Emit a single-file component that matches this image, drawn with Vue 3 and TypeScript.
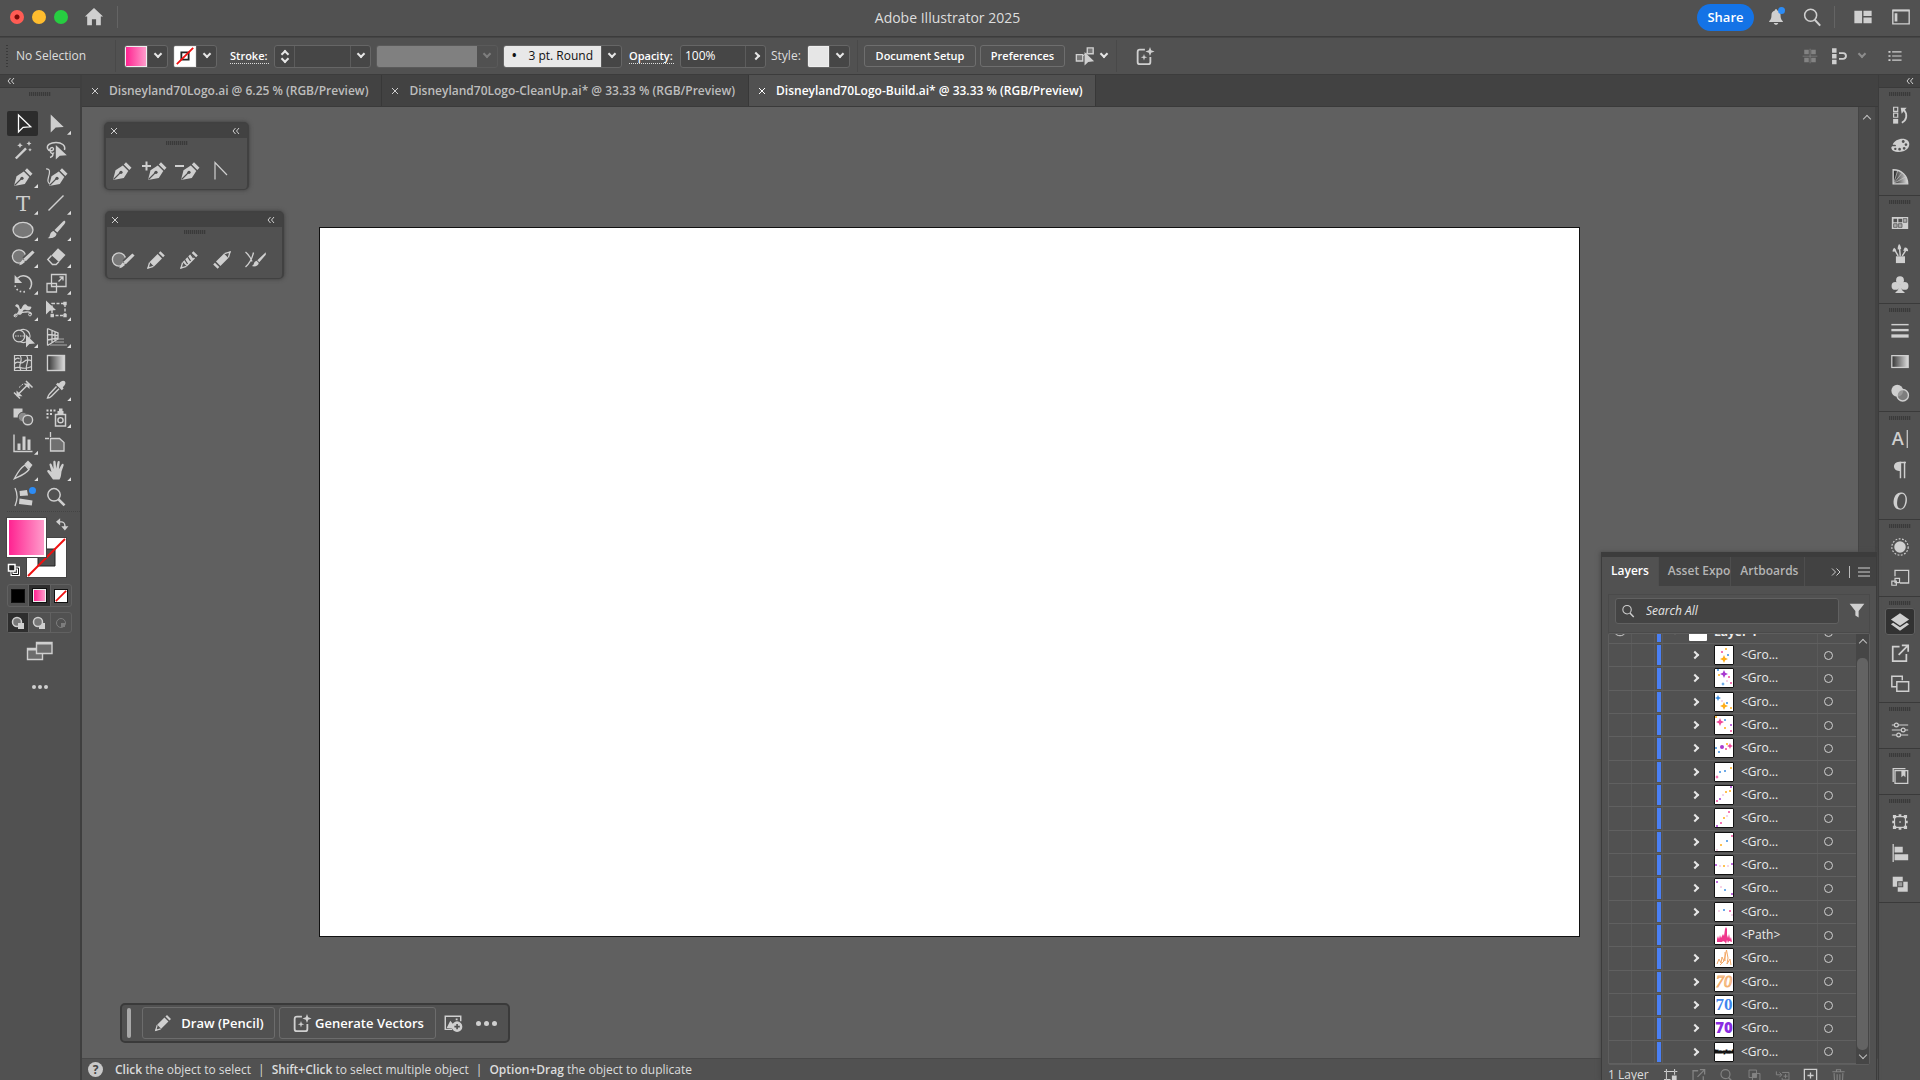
<script setup lang="ts">
import { ref } from 'vue'

interface Tool { name: string; icon: string; more?: boolean; dot?: boolean }
interface Dot { x: number; y: number; r: number; c: string; star?: boolean }
interface LayerRow { name: string; kind: 'dots' | 'castle' | 'outline' | 'script' | 'blue' | 'purple' | 'word'; dots?: Dot[] }

const F = 'fill="currentColor" stroke="none"'
const penShape = `<path ${F} d="M2 20 4.5 10.3 11.8 5.600 17.300 11 12.800 17.900Z"/><path ${F} d="M12.800 4.500 15 2.300 20.500 7.800 18.300 10Z"/><path d="M2.500 19.500 9.500 12.500" stroke="#505050" stroke-width="1.100"/><circle cx="10" cy="12.300" r="1.600" fill="#505050" stroke="none"/>`
const blobShape = `<circle cx="7" cy="10.5" r="6.6" fill="#787878" stroke-width="1.3"/><path d="M21.6 4.6 12.6 13.6" stroke="#505050" stroke-width="6"/><path ${F} d="M20.4 4.4 22.6 6.6 13.8 15.2 11.4 12.8ZM10.6 13.6 13 16 9.8 18.6 7.2 19.2 8.4 16.4Z"/>`
const pencilShape = `<path ${F} d="M4.600 13 12.600 5 17 9.400 9 17.400ZM13.700 3.900 15.400 2.200 19.800 6.600 18.100 8.300Z"/><path d="M4.600 13.500 3 19 8.500 17.400" stroke-width="1.300"/><path ${F} d="M3.400 16.800 5.200 18.600 2.200 19.800Z"/>`
const sparkBox = `<path d="M12 4H6.5A2.5 2.5 0 0 0 4 6.5v11A2.5 2.5 0 0 0 6.5 20h9a2.5 2.5 0 0 0 2.5-2.5V12" stroke-width="2"/><path ${F} d="M17.6 1l1.300 3.700 3.700 1.300-3.700 1.300-1.300 3.700-1.300-3.700L12.600 6l3.700-1.300ZM11 8.8l.9 2.700 2.700.9-2.700.9-.9 2.700-.9-2.700-2.700-.9 2.700-.9Z"/>`

const icons: Record<string, string> = {
  select: `<path d="M6.5 3v17l4.600-4.600 7.600-.6Z" stroke-width="1.3"/>`,
  direct: `<path ${F} d="M5.7 2.5v18l5-5 8-.6Z"/>`,
  wand: `<path d="M3.8 19.5 14 9.300" stroke-width="2.400"/><path ${F} d="M8 3.500l.9 1.900 1.900.9-1.900.9L8 9.100l-.9-1.900-1.900-.9 1.900-.9ZM17 2l.8 1.700 1.700.8-1.700.8L17 7l-.8-1.700-1.700-.8 1.700-.8ZM18 9l.6 1.200 1.200.6-1.200.6-.6 1.200-.6-1.200-1.200-.6 1.200-.6Z"/>`,
  lasso: `<path d="M19.5 11c1.500-4.500-3-7.500-8.500-7.500S1.500 6 2.500 9.500c1 3 6 3 6 .5s-4-1.500-3.500 1.500 3 4 4 2M8 15c0 1.500-.8 3-3 3.500" stroke-width="1.4"/><path ${F} d="M10.8 6v14.500l4-3.800 7-.5Z" stroke="#505050"/>`,
  pen: penShape,
  penAdd: `<g transform="translate(4)">${penShape}</g><path d="M0 6h9M4.500 1.500v9" stroke-width="2"/>`,
  penDel: `<g transform="translate(4)">${penShape}</g><path d="M0 6h9" stroke-width="2"/>`,
  anchor: `<path d="M5 19.500V2.500L17 15" stroke-width="1.200"/>`,
  curve: `<path d="M1 3c5-.5 3.500 4.500 2.500 8s-1 7 3 7.500" stroke-width="1.2"/><g transform="translate(2)">${penShape}</g>`,
  type: `<text x="11" y="19" text-anchor="middle" font-family="DejaVu Serif" font-size="21" ${F}>T</text>`,
  line: `<path d="M3.5 18.5 18.5 3.5" stroke-width="1.5"/>`,
  ellipse: `<ellipse cx="11" cy="11" rx="10" ry="7.600" fill="#787878" stroke-width="1.3"/>`,
  brush: `<path ${F} d="M19.700 1.800c1.200.8.600 2.200-.4 3.400l-7 8.300-2.800-2.600 8-7.900c.8-.8 1.500-1.600 2.200-1.200ZM8.600 12l3 2.800c-.6 3.600-4.600 5-9.100 4.200 2.700-1 2-2.700 3-4.600.6-1.200 1.800-2 3.100-2.400Z"/>`,
  blob: blobShape,
  eraser: `<path ${F} d="M13 2.300 20.500 9 14 16 6.500 9.300Z"/><path d="M6.500 9.500 2.800 13.500 7.500 18.500h3.600l2.700-2.800" stroke-width="1.400"/>`,
  rotate: `<path d="M5.500 6.200C11 .8 20 5 19.500 12.500c-.2 2-1 3.500-2 4.700" stroke-width="1.500"/><path ${F} d="M2.600 3v8h7.500Z"/><path d="M3 13.500c1 4.500 6 8 12 5.500" stroke-width="1.600" stroke-dasharray="1.600 2.200"/>`,
  scale: `<path d="M6.500 2.500h14.500v12H6.500ZM2 11.500h9.500v8.500H2ZM13.500 9.500l4-4M14.500 5h3.500v3.500" stroke-width="1.300"/>`,
  width: `<path ${F} d="M3 7c1.500-3 4-1.500 4.500 1.500.5 2 1.500 2 2.500 0 1-3 3.500-4.500 5-2 1 1.500 3 .5 4.500 1.500-1 4-4 3.500-5.500 3-2-.6-3 0-3.500 2-1 3.500-4 3.500-5 1.500-.5-1.500 1.500-2 1-4C6 8.500 5 8 3 7Z"/><path d="M2 17.500c3-4 8-4 12-4.500 3-.4 5 0 5.500 2.500" stroke-width="1.400"/><circle cx="3.600" cy="16.500" r="1.400"/><circle cx="18" cy="15.500" r="1.400"/>`,
  freeTransform: `<path d="M7 4.500h13v12H7Z" stroke-dasharray="3 1.500" stroke-width="1.400"/><path ${F} d="M18.300 2.800h3.400v3.400h-3.400ZM18.300 14.800h3.400v3.400h-3.400ZM5.500 14.800h3.400v3.400H5.500Z"/><path ${F} d="M1 1.500v14l3.700-3.800 6.300-.6Z"/>`,
  builder: `<circle cx="7" cy="10" r="5.800" stroke-width="1.300"/><path d="M8 4.500a6.500 6.500 0 1 1 0 11" stroke-width="1.300"/><path d="M3 10h9" stroke-dasharray="1.500 1"/><path ${F} d="M14 8.500v13l3.400-3.400 5.600-.6Z"/>`,
  perspective: `<path d="M2.500 2.500v17M2.500 2.500 13 7v6L2.500 19.500M7 4.500v12M10 6v9M2.500 8.500 13 9.500M2.500 14 13 12" stroke-width="1.300"/><path d="M13 13h6M10 16h9M5 19h17" stroke-width="1" opacity=".7"/>`,
  mesh: `<path d="M2.500 3.500h17v15h-17ZM2.500 12c3-5 6 1 9-2s5-3 8-1M8 3.500c4 5-3 9 1 15M14.500 3.500c4 6-2 9 0 15M2.500 8c2-2 4-2 5-1M2.500 16.500c4-4 8 3 17-2" stroke-width="1.200"/>`,
  gradient: `<defs><linearGradient id="tg"><stop offset="0" stop-color="#333"/><stop offset="1" stop-color="#ddd"/></linearGradient></defs><rect x="2.500" y="3.500" width="17" height="15" fill="url(#tg)" stroke-width="1.400"/>`,
  measure: `<path d="M5 16.500 16.500 5M2 13.500l6 6M14 2l6.500 6.500" stroke-width="1.500"/><path ${F} d="M4.500 11.500v5.800h6ZM17.500 10V4.500h-6Z"/><path d="M7 8.500 11 5" stroke-dasharray="2 1.300"/>`,
  eyedropper: `<path ${F} d="M14 4.500c2-3 4.500-3.500 5.800-2.200s.7 3.800-2 5.900l.8 1.300-1.800 1.800L11 5.500 12.700 3.700Z"/><path d="M11.500 7.500 4.500 15c-1 1-1.500 2.500-2 4 1.500 0 3-.8 4-1.800l7.500-7.400" stroke-width="1.400"/>`,
  blend: `<path ${F} d="M1.500 2.500h9v9h-9Z"/><circle cx="11" cy="11" r="4.800" fill="#8a8a8a" stroke="#505050"/><circle cx="15.800" cy="14" r="4.800" fill="#626262" stroke-width="1.400"/>`,
  symbol: `<path d="M10.500 8.500h10v11.500h-10Z" stroke-width="1.500"/><circle cx="15.500" cy="14.200" r="2.600" stroke-width="1.400"/><path ${F} d="M12.500 5h6v3h-6ZM14 2.500h3.500V5H14ZM1.500 3.500h2v2h-2ZM5 3.500h2v2H5ZM8.500 3.500h2v2h-2ZM1.500 7h2v2h-2ZM5 7h2v2H5ZM1.500 10.500h2v2h-2Z"/>`,
  graph: `<path d="M2 2.500v17h18.500" stroke-width="1.400"/><path ${F} d="M5.500 11.500h3V18h-3ZM10.500 4.500h3V18h-3ZM15.500 7.500h3V18h-3Z"/>`,
  artboard: `<path d="M5.500 0v5M0 6.500h4" stroke-width="1.300"/><path d="M5.500 6.500H14.500L19 10.500v8.500H5.500Z" fill="#707070" stroke-width="1.300"/>`,
  slice: `<path d="M2.500 19.500C5 15 7 10 13 6l4 4.500c-4 5-9 6.500-14.500 9Z" stroke-width="1.400"/><path ${F} d="M12.500 5 16 1.500l4.500 4.500-3 4Z"/>`,
  hand: `<path ${F} d="M8 20.500 2.500 13c-1-1.500.7-2.700 2-1.500L6.500 13 4.500 6c-.4-1.600 1.700-2 2.200-.6L8.500 10 8.300 3c0-1.600 2.200-1.600 2.300 0l.6 6.500L12.500 3c.3-1.500 2.400-1.200 2.200.3l-.8 7 2.700-4.800c.8-1.300 2.500-.4 2 1L16.500 12.500c-.5 3.500-.5 5.500-2 8Z"/>`,
  retype: `<path d="M3 2c2.500 5 2.500 12 0 18" stroke-width="1.300"/><path ${F} d="M7.500 5 15 4l1 5.500-8 .5ZM7.500 12.500 20.500 14.500 19.800 19.500 7 18Z"/>`,
  zoom: `<circle cx="9" cy="8.800" r="6.200" stroke-width="1.500"/><path d="M13.500 13.300 19.500 19.300" stroke-width="2.600"/>`,
  pencil: pencilShape,
  smooth: `${pencilShape}<path d="M6 9.500 9.500 15M9 6.500 12.500 12M12 4l3.500 5" stroke="#505050" stroke-width="1.300"/>`,
  pathErase: `<g transform="translate(22 22) rotate(180)">${pencilShape}</g>`,
  join: `<path d="M1.500 3c4 3.500 6 8 6.500 9.500M9.500 3.500C8.500 8 6 14 1.500 18" stroke-width="1.300"/><path ${F} d="M21.800 3.300v2.400l-6.500 7.500-2-2ZM12.600 11.800l2.200 2.200c-.5 3-4 4-7 3 2-.6 1.800-2 2.500-3.400.5-1 1.300-1.500 2.300-1.800Z"/>`,
  home: `<path ${F} d="M11 1 21 10.500h-2.500V20h-5.200v-6.500H8.700V20H3.500v-9.500H1Z"/>`,
  bell: `<path ${F} d="M11 2.500c.8 0 1.300.5 1.300 1.300 2.500.6 3.700 2.700 3.700 5.200 0 4 1.200 5 2.500 6.500v1h-15v-1C4.800 14 6 13 6 9c0-2.500 1.200-4.600 3.700-5.200 0-.8.5-1.300 1.300-1.300ZM8.500 17.500h5c-.3 1.300-1.300 2-2.500 2s-2.200-.7-2.500-2Z"/>`,
  search: `<circle cx="9.500" cy="9" r="6.600" stroke-width="1.700"/><path d="M14 14 20 20.500" stroke-width="2.200"/>`,
  layout: `<path ${F} d="M1.500 4h8.500v14H1.500ZM11.500 4h9v6h-9ZM11.500 11.500h9V18h-9Z"/>`,
  panel: `<path d="M2 3.500h18v15H2Z" stroke-width="1.500"/><path ${F} d="M4 7h3v9H4ZM2 3h18v2H2Z"/>`,
  spark: sparkBox,
  arrange: `<path d="M1.500 9.500h7v7h-7ZM13.500 2h6.500v6.500h-6.500Z" fill="#777" stroke-width="1.500"/><path d="M8.500 11 14 7" stroke-width="1"/><path ${F} d="M10.500 6.500v15l4-4 6.500-.6Z"/>`,
  gridIcon: `<path ${F} d="M4 3.500h5.500V9H4ZM12.500 3.500H18V9h-5.500ZM4 13h5.500v5.500H4ZM12.500 13H18v5.500h-5.500ZM10.600 2h1v18h-1ZM2 10.600h18v1H2Z"/>`,
  magnet: `<path ${F} d="M2.500 1.500H8V7H2.500ZM2.500 8.500H8V14H2.500ZM2.500 15.500H8V21H2.500Z"/><path d="M11 7.500h5a3.500 3.500 0 0 1 0 7h-5" stroke-width="2.400"/>`,
  list: `<path d="M7.500 6H19M7.500 11H19M7.500 16H19" stroke-width="1.500"/><path ${F} d="M3 5h2.500v2H3ZM3 10h2.500v2H3ZM3 15h2.500v2H3Z"/>`,
  history: `<path d="M4 2.500h4.500V7H4ZM4 9h4.500v4.500H4Z" stroke-width="1.300"/><path ${F} d="M3.400 15.300h5.600V20.500H3.400Z"/><path d="M13 19.500c5.500-2.500 6.500-9 2.500-14" stroke-width="2"/><path ${F} d="M11.800 3h6.500l-5.500 6.500Z"/>`,
  palette: `<path ${F} fill-rule="evenodd" d="M3 9.500c2-6 12-8.500 16.500-4.500 3.500 3.500 1.500 9.500-4 11.500-6 2-13 1.500-14-3-.3-2 1-2.500 3-2.200 2.400.2 3-1.300 1-1.800ZM14.500 4.500a1.600 1.600 0 1 0 .1 0ZM17.500 8a1.500 1.500 0 1 0 .1 0ZM15.500 12a1.500 1.500 0 1 0 .1 0ZM10.500 13a1.500 1.500 0 1 0 .1 0ZM5.800 12.800a1.300 1.300 0 1 0 .1 0Z"/>`,
  guide: `<defs><linearGradient id="cg"><stop offset="0" stop-color="#222"/><stop offset="1" stop-color="#ddd"/></linearGradient></defs><path d="M3.500 3C13 3 19.500 10 19.500 18.500h-16Z" fill="url(#cg)" stroke-width="1.500"/><path d="M4 18 8.500 4M4 18l9-11M4 18 17 11" stroke-width=".7"/>`,
  swatches: `<path ${F} fill-rule="evenodd" d="M2 4.500h18v13H2ZM3.800 6.200v4h4v-4ZM9.200 6.200v4h4v-4Z"/><path d="M14.500 6.200h4v4h-4ZM4 11.800h3.800v4H4ZM9.200 11.800h4v4h-4Z" fill="#aaa" stroke="#505050" stroke-width=".8"/>`,
  brushes: `<path ${F} d="M6.500 13.500h10V21h-10Z"/><path d="M9 13 5.500 7M11.300 13 10.500 5M13.500 13 17 7.500" stroke-width="1.600"/><path ${F} d="M3 8.500c-.5-2 .5-3 1.500-4.500 1.500 1.200 2.500 2.200 2.300 4ZM8.500 6C8.300 3.500 9 1.500 10 0c1.500 1.500 2.300 3.500 2.300 5.500ZM14.500 7.500 16 4c2.500-.5 4 1.500 4 4Z"/>`,
  club: `<circle cx="11" cy="5.800" r="4.300" ${F}/><circle cx="6" cy="12" r="4.300" ${F}/><circle cx="16" cy="12" r="4.300" ${F}/><path ${F} d="M10 10h2c.2 5 1 7.500 4 9v.8H6V19c3-1.500 3.800-4 4-9Z"/>`,
  stroke: `<path d="M1.500 4h19" stroke-width="1.600"/><path d="M1.500 10h19" stroke-width="2.600"/><path d="M1.500 16.500h19" stroke-width="3.600"/>`,
  gradPanel: `<rect x="2" y="4" width="18" height="13" fill="url(#tg)" stroke-width="1.400"/>`,
  transparency: `<circle cx="8" cy="8.500" r="6.500" ${F}/><circle cx="14" cy="13.500" r="6.300" fill="#8a8a8a" fill-opacity=".8" stroke-width="1.500"/>`,
  charPanel: `<text x="8.500" y="17.500" text-anchor="middle" font-family="Open Sans" font-size="20" font-weight="600" ${F}>A</text><path d="M19 1v20" stroke-width="1.300"/>`,
  para: `<path d="M11.500 2v18M16 2v18" stroke-width="1.600"/><path ${F} d="M17.500 2H10C2.500 2 2.500 12 10 12h1.500V3.500h6Z"/>`,
  openType: `<g transform="rotate(10 11 11)"><path ${F} fill-rule="evenodd" d="M11.500 1.500c4.500 0 7 4 7 9.500s-2.500 9.500-7 9.500-7.500-4-7.500-9.500 3-9.500 7.500-9.500ZM12.500 2.800C9.500 2.800 8 6.500 8 11s1.500 8.200 4.500 8.200 4.300-3.700 4.300-8.200-1.300-8.200-4.300-8.200Z"/></g>`,
  appearance: `<circle cx="11" cy="11" r="6.300" ${F}/><circle cx="11" cy="11" r="9" stroke-dasharray="2 1.700" stroke-width="1.300"/>`,
  styles: `<path d="M5.500 9V2.500H20.500V16.500H11" stroke-width="1.400"/><path d="M2 14.500h5v4.500H2ZM5.500 11.500h5V16h-5Z" stroke-width="1.300"/>`,
  layers: `<path ${F} d="M11 1.500 21 8.300 11 15 1 8.300Z"/><path ${F} d="M1 13.500 3.500 11.800 11 16.700 18.500 11.800 21 13.500 11 20.500Z"/>`,
  exportIcon: `<path d="M10.500 4H3v16h15v-8" stroke-width="1.900"/><path d="M9.500 13 19 3.500M13 2.500h7v7" stroke-width="1.900"/>`,
  artboards: `<path d="M7.500 14H2V2.500h11.500V7M7.500 8.500H20.500v10.500H7.500Z" stroke-width="1.600"/>`,
  sliders: `<path d="M2 5.500h3M9 5.500h11M2 11h10M16.500 11H20M2 16.500h5.500M12 16.500h8" stroke-width="1.300"/><circle cx="7" cy="5.500" r="2.100" stroke-width="1.300"/><circle cx="14.500" cy="11" r="2.100" stroke-width="1.300"/><circle cx="9.500" cy="16.500" r="2.100" stroke-width="1.300"/>`,
  library: `<path d="M3.500 17.500V3h13.500" stroke-width="1.400"/><path d="M5.500 5h14v14h-14Z" stroke-width="1.400"/><path ${F} d="M12.500 5h4.500v7.500l-2.200-2-2.300 2Z"/>`,
  transform: `<path d="M5 5h12v12H5Z" stroke-width="1.300"/><path ${F} d="M3.200 3.200h3.600v3.600H3.200ZM15.200 3.200h3.600v3.600h-3.600ZM3.200 15.200h3.600v3.600H3.200ZM15.200 15.200h3.600v3.600h-3.600ZM9.500 2.500h3v3h-3ZM9.500 16.500h3v3h-3ZM2.500 9.500h3v3h-3ZM16.500 9.500h3v3h-3ZM10.300 10.300h1.500v1.500h-1.500Z"/>`,
  align: `<path d="M3.500 1v20" stroke-width="1.400"/><path ${F} d="M5 4h9v6.500H5ZM5 12.500h15V19H5Z"/>`,
  pathfinder: `<path ${F} d="M3 3h11v11H3Z"/><path ${F} d="M8.500 8.500H19.500V19.500H8.500Z"/><path d="M8.500 8.500H14V14H8.500Z" fill="#9a9a9a" stroke="#505050" stroke-width="1.200"/>`,
  imageAdd: `<path d="M10 18H2.500V3.500h17V9" stroke-width="1.600"/><path ${F} d="M4 16.500 8 8.500l3 3.500v5ZM14 6h2v2h-2Z"/><circle cx="15.500" cy="15" r="5.800" ${F}/><path d="M15.500 12v6M12.500 15h6" stroke="#505050" stroke-width="1.800"/>`,
  funnel: `<path ${F} d="M2 2h18l-7 9v8l-4-2.500V11Z"/>`,
  locate: `<path d="M5 5h12M5 5v12M17 5v5M5 17h6M1.500 5h3M5 1.500v3M17 1.500v3M18 5h3M1.500 17h3" stroke-width="1.500"/><path ${F} d="M13 11h7v8h-7Z"/>`,
  mask: `<path d="M3 3h11v11H3ZM8 8h11v11H8Z" stroke-width="1.400"/><path ${F} d="M8 8h6v6H8Z"/>`,
  subLayer: `<path d="M2 5v5h7M6.500 6.500l3.500 3.500-3.500 3.500M10.500 6.500h10v11h-10v-3M15.500 9v6M12.500 12h6" stroke-width="1.400"/>`,
  newLayer: `<path d="M2 2h18v18H2ZM11 6.500v9M6.500 11h9" stroke-width="1.900"/>`,
  trash: `<path d="M2 5.500h18M8 5V2.500h6V5M4.500 7.500l.7 13h11.600l.7-13M9 9v9M13 9v9" stroke-width="1.600"/>`,
  screenMode: `<path d="M1.500 8.500h15v11h-15Z" fill="#6c6c6c" stroke-width="1.400"/><path d="M10.500 2.500h15.500v11H10.500Z" fill="#6c6c6c" stroke-width="1.400"/><path d="M10.500 3.500H26M1.500 9.500h8.500" stroke-width="2"/>`,
  swap: `<path d="M5 6.500h4a6 6 0 0 1 6 6v3" stroke-width="2.400"/><path ${F} d="M7 .5v12L0 6.500ZM9 14h12l-6 7Z"/>`,
}

const tools: Tool[] = [
  { name: 'Selection', icon: 'select' }, { name: 'Direct Selection', icon: 'direct', more: true },
  { name: 'Magic Wand', icon: 'wand' }, { name: 'Lasso', icon: 'lasso' },
  { name: 'Pen', icon: 'pen', more: true }, { name: 'Curvature', icon: 'curve' },
  { name: 'Type', icon: 'type', more: true }, { name: 'Line Segment', icon: 'line', more: true },
  { name: 'Ellipse', icon: 'ellipse', more: true }, { name: 'Paintbrush', icon: 'brush', more: true },
  { name: 'Blob Brush', icon: 'blob', more: true }, { name: 'Eraser', icon: 'eraser', more: true },
  { name: 'Rotate', icon: 'rotate', more: true }, { name: 'Scale', icon: 'scale', more: true },
  { name: 'Width', icon: 'width', more: true }, { name: 'Free Transform', icon: 'freeTransform', more: true },
  { name: 'Shape Builder', icon: 'builder', more: true }, { name: 'Perspective Grid', icon: 'perspective', more: true },
  { name: 'Mesh', icon: 'mesh' }, { name: 'Gradient', icon: 'gradient' },
  { name: 'Dimension', icon: 'measure' }, { name: 'Eyedropper', icon: 'eyedropper', more: true },
  { name: 'Blend', icon: 'blend' }, { name: 'Symbol Sprayer', icon: 'symbol', more: true },
  { name: 'Column Graph', icon: 'graph', more: true }, { name: 'Artboard', icon: 'artboard' },
  { name: 'Slice', icon: 'slice', more: true }, { name: 'Hand', icon: 'hand', more: true },
  { name: 'Retype', icon: 'retype', dot: true }, { name: 'Zoom', icon: 'zoom' },
]
const activeTool = ref('Selection')

const files = [
  'Disneyland70Logo.ai @ 6.25 % (RGB/Preview)',
  'Disneyland70Logo-CleanUp.ai* @ 33.33 % (RGB/Preview)',
  'Disneyland70Logo-Build.ai* @ 33.33 % (RGB/Preview)',
]
const activeFile = ref(2)

const dock = [
  ['history', 'palette', 'guide'],
  ['swatches', 'brushes', 'club'],
  ['stroke', 'gradPanel', 'transparency'],
  ['charPanel', 'para', 'openType'],
  ['appearance', 'styles'],
  ['layers', 'exportIcon', 'artboards'],
  ['sliders'],
  ['library'],
  ['transform', 'align', 'pathfinder'],
]

const penTools = ['pen', 'penAdd', 'penDel', 'anchor']
const drawTools = ['blob', 'pencil', 'smooth', 'pathErase', 'join']
const layerActions = [
  { icon: 'locate', on: true }, { icon: 'exportIcon', on: false }, { icon: 'search', on: false },
  { icon: 'mask', on: false }, { icon: 'subLayer', on: false }, { icon: 'newLayer', on: true }, { icon: 'trash', on: false },
]

const P = '#a838d0', K = '#f04a9a', O = '#ffae1a', B = '#3c8ee0', L = '#f3c6e2'
const d = (x: number, y: number, r: number, c: string, star = false): Dot => ({ x, y, r, c, star })
const group = (dots: Dot[]): LayerRow => ({ name: '<Gro...', kind: 'dots', dots })
const rows: LayerRow[] = [
  group([d(9, 13, 4, O, true), d(11, 3, 1, O), d(7, 6, 1, K), d(13, 9, 1, B)]),
  group([d(9, 5, 4, P, true), d(8, 15, 2, B, true), d(3, 1, 1, B), d(4, 6, 1, O), d(14, 8, 1, K), d(12, 12, 1, L), d(16, 14, 1, K)]),
  group([d(3, 5, 3, B, true), d(9, 13, 4, O, true), d(7, 8, 1, L), d(12, 10, 1, B), d(16, 15, 1, O)]),
  group([d(5, 6, 4, K, true), d(16, 9, 1, P), d(10, 4, 1, B), d(10, 12, 1, O), d(1, 1, 1, O), d(16, 15, 1, K)]),
  group([d(7, 8, 2, P), d(15, 7, 3, K, true), d(1, 9, 1, B), d(4, 13, 1, B), d(11, 10, 1, K), d(12, 5, 1, O)]),
  group([d(2, 14, 2, K, true), d(5, 9, 1, B), d(10, 8, 1, B), d(16, 5, 1, O)]),
  group([d(5, 13, 1, P), d(2, 15, 1, K), d(8, 9, 1, L), d(11, 6, 1, O), d(15, 5, 1, O), d(16, 1, 1, P)]),
  group([d(14, 3, 1, K), d(9, 9, 1, O), d(6, 14, 1, K), d(12, 7, 1, L), d(2, 17, 1, P)]),
  group([d(6, 12, 1, O), d(12, 8, 1, B), d(17, 3, 1, K), d(2, 17, 1, L)]),
  group([d(9, 10, 1, O), d(17, 8, 1, P), d(1, 9, 1, P), d(5, 10, 1, L), d(13, 10, 1, L)]),
  group([d(2, 3, 1, P), d(17, 15, 1, P), d(10, 11, 1, B), d(6, 8, 1, L)]),
  group([d(9, 7, 1, B), d(4, 8, 1, L), d(15, 8, 1, K), d(17, 12, 1, L)]),
  { name: '<Path>', kind: 'castle' },
  { name: '<Gro...', kind: 'outline' },
  { name: '<Gro...', kind: 'script' },
  { name: '<Gro...', kind: 'blue' },
  { name: '<Gro...', kind: 'purple' },
  { name: '<Gro...', kind: 'word' },
]
</script>

<template>
  <div class="app">
    <header class="titlebar">
      <span class="light red"></span><span class="light yellow"></span><span class="light green"></span>
      <button class="icon-btn home" aria-label="Home"><svg viewBox="0 0 22 22" v-html="icons.home"></svg></button>
      <span class="vline"></span>
      <h1>Adobe Illustrator 2025</h1>
      <div class="title-right">
        <button class="share">Share</button>
        <button class="icon-btn bell" aria-label="Notifications"><svg viewBox="0 0 22 22" v-html="icons.bell"></svg><i class="dot"></i></button>
        <button class="icon-btn find" aria-label="Search"><svg viewBox="0 0 22 22" v-html="icons.search"></svg></button>
        <span class="vline"></span>
        <button class="icon-btn" aria-label="Arrange documents"><svg viewBox="0 0 22 22" v-html="icons.layout"></svg></button>
        <button class="icon-btn" aria-label="Workspace"><svg viewBox="0 0 22 22" v-html="icons.panel"></svg></button>
      </div>
    </header>

    <div class="controlbar">
      <span class="vgrip"></span>
      <span class="selection">No Selection</span>
      <span class="vsep"></span>
      <div class="combo fill">
        <button class="sw gradient" aria-label="Fill"></button>
        <button class="dd" aria-label="Fill options"><i class="chev down"></i></button>
      </div>
      <div class="combo strk">
        <button class="sw none" aria-label="Stroke color"><svg viewBox="0 0 22 22"><path d="M7 7h8v8H7Z" stroke="#222" stroke-width="2" /><path d="M2 20 20 2" stroke="#f01010" stroke-width="2" /></svg></button>
        <button class="dd" aria-label="Stroke options"><i class="chev down"></i></button>
      </div>
      <label class="under stroke-label" for="weight">Stroke:</label>
      <div class="combo weight">
        <button class="dd step" aria-label="Step weight"><i class="chev up"></i><i class="chev down"></i></button>
        <input id="weight" type="text" value="" />
        <button class="dd" aria-label="Weights"><i class="chev down"></i></button>
      </div>
      <div class="combo profile">
        <input type="text" disabled aria-label="Width profile" />
        <button class="dd off" disabled aria-label="Profiles"><i class="chev down"></i></button>
      </div>
      <div class="combo brushdef">
        <button class="brush-name"><b>•</b>3 pt. Round</button>
        <button class="dd" aria-label="Brushes"><i class="chev down"></i></button>
      </div>
      <label class="under opacity-label" for="opacity">Opacity:</label>
      <div class="combo opacity">
        <input id="opacity" type="text" value="100%" />
        <button class="dd" aria-label="Opacity slider"><i class="chev right"></i></button>
      </div>
      <span class="style-label">Style:</span>
      <div class="combo styl">
        <button class="sw plain" aria-label="Graphic style"></button>
        <button class="dd" aria-label="Styles"><i class="chev down"></i></button>
      </div>
      <span class="vsep"></span>
      <button class="btn doc">Document Setup</button>
      <button class="btn pref">Preferences</button>
      <button class="icon-btn" aria-label="Select similar"><svg viewBox="0 0 22 22" v-html="icons.arrange"></svg></button>
      <i class="chev down"></i>
      <span class="vsep"></span>
      <button class="icon-btn" aria-label="Generate"><svg viewBox="0 0 22 22" v-html="icons.spark"></svg></button>
      <div class="control-right">
        <button class="icon-btn dim" aria-label="Grid"><svg viewBox="0 0 22 22" v-html="icons.gridIcon"></svg></button>
        <button class="icon-btn" aria-label="Snap"><svg viewBox="0 0 22 22" v-html="icons.magnet"></svg></button>
        <i class="chev down dim"></i>
        <button class="icon-btn" aria-label="Bar menu"><svg viewBox="0 0 22 22" v-html="icons.list"></svg></button>
      </div>
    </div>

    <div class="workspace">
      <aside class="toolbox">
        <div class="col-head">
          <svg class="dbl" viewBox="0 0 8 8"><path d="M3.500 1 1 4l2.500 3M7 1 4.500 4 7 7" /></svg>
        </div>
        <span class="grip"></span>
        <div class="tools">
          <button
            v-for="t in tools" :key="t.name" class="tool" :class="{ active: t.name === activeTool, more: t.more }"
            :aria-label="t.name" @click="activeTool = t.name"
          >
            <svg viewBox="0 0 22 22" v-html="icons[t.icon]"></svg>
            <i v-if="t.dot" class="dot"></i>
          </button>
        </div>
        <div class="paint">
          <button class="paint-stroke" aria-label="Stroke"><svg viewBox="0 0 39 39"><path d="M11 11h17v17H11Z" fill="#505050" stroke="#222" /><path d="M1 38 38 1" stroke="#f01010" stroke-width="2" /></svg></button>
          <button class="paint-fill" aria-label="Fill"></button>
          <button class="paint-swap" aria-label="Swap"><svg viewBox="0 0 22 22" v-html="icons.swap"></svg></button>
          <button class="paint-reset" aria-label="Default colors"><svg viewBox="0 0 13 13"><path d="M5 5h6.500v6.500H5Z" fill="#505050" stroke="#fff" stroke-width="3" /><path d="M5 5h6.500v6.500H5Z" stroke="#111" /><path d="M1.500 1.500H8V8H1.500Z" fill="#222" stroke="#fff" stroke-width="1.500" /></svg></button>
        </div>
        <div class="modes">
          <button class="solid" aria-label="Color"><i></i></button>
          <button class="grad on" aria-label="Gradient"><i></i></button>
          <button class="nopaint" aria-label="None"><i><svg viewBox="0 0 14 14"><path d="M1 13 13 1" stroke="#f01010" stroke-width="2" /></svg></i></button>
        </div>
        <div class="modes draw">
          <button class="on" aria-label="Draw normal"><svg viewBox="0 0 16 16"><circle cx="7" cy="7" r="4.500" fill="#777" stroke-width="1.500" /><path d="M8 8h6v6H8Z" fill="currentColor" stroke="none" /></svg></button>
          <button aria-label="Draw behind"><svg viewBox="0 0 16 16"><path d="M8 8h6v6H8Z" fill="currentColor" stroke="none" /><circle cx="7" cy="7" r="4.500" fill="#777" stroke-width="1.500" /></svg></button>
          <button class="faint" aria-label="Draw inside"><svg viewBox="0 0 16 16"><circle cx="8" cy="8" r="4.500" /><path d="M8 8h4v4H8Z" fill="currentColor" stroke="none" /></svg></button>
        </div>
        <button class="screen" aria-label="Screen mode"><svg viewBox="0 0 28 22" v-html="icons.screenMode"></svg></button>
        <button class="dots" aria-label="Edit toolbar"><i></i><i></i><i></i></button>
      </aside>

      <main class="center">
        <nav class="tabs">
          <button v-for="(f, i) in files" :key="f" class="tab" :class="{ active: i === activeFile }" @click="activeFile = i">
            <svg class="x" viewBox="0 0 8 8"><path d="M1 1l6 6M7 1 1 7" /></svg>{{ f }}
          </button>
        </nav>
        <div class="stage">
          <div class="canvas">
            <div class="artboard"></div>
            <section class="float pens">
              <div class="float-head">
                <svg class="x" viewBox="0 0 8 8"><path d="M1 1l6 6M7 1 1 7" /></svg>
                <svg class="dbl" viewBox="0 0 8 8"><path d="M3.500 1 1 4l2.500 3M7 1 4.500 4 7 7" /></svg>
              </div>
              <span class="grip"></span>
              <div class="float-tools">
                <button v-for="p in penTools" :key="p" :aria-label="p">
                  <svg :class="{ wide: p === 'penAdd' || p === 'penDel' }" :viewBox="p === 'penAdd' || p === 'penDel' ? '0 0 26 22' : '0 0 22 22'" v-html="icons[p]"></svg>
                </button>
              </div>
            </section>
            <section class="float draws">
              <div class="float-head">
                <svg class="x" viewBox="0 0 8 8"><path d="M1 1l6 6M7 1 1 7" /></svg>
                <svg class="dbl" viewBox="0 0 8 8"><path d="M3.500 1 1 4l2.500 3M7 1 4.500 4 7 7" /></svg>
              </div>
              <span class="grip"></span>
              <div class="float-tools">
                <button v-for="p in drawTools" :key="p" :aria-label="p"><svg viewBox="0 0 22 22" v-html="icons[p]"></svg></button>
              </div>
            </section>
            <div class="taskbar">
              <span class="handle"></span>
              <button class="task draw-btn"><svg viewBox="0 0 22 22" v-html="icons.pencil"></svg>Draw (Pencil)</button>
              <button class="task gen-btn"><svg viewBox="0 0 22 22" v-html="icons.spark"></svg>Generate Vectors</button>
              <button class="icon-btn img-btn" aria-label="Place image"><svg viewBox="0 0 22 22" v-html="icons.imageAdd"></svg></button>
              <button class="dots" aria-label="More"><i></i><i></i><i></i></button>
            </div>
          </div>
          <div class="vscroll"><i class="chev up"></i></div>
        </div>
        <footer class="status">
          <span class="help">?</span>
          <span><b>Click</b> the object to select</span><span class="bar">|</span>
          <span><b>Shift+Click</b> to select multiple object</span><span class="bar">|</span>
          <span><b>Option+Drag</b> the object to duplicate</span>
        </footer>
      </main>

      <aside class="dock">
        <div class="col-head">
          <svg class="dbl" viewBox="0 0 8 8"><path d="M3.500 1 1 4l2.500 3M7 1 4.500 4 7 7" /></svg>
        </div>
        <div v-for="(g, gi) in dock" :key="gi" class="dock-group">
          <span class="grip"></span>
          <button v-for="n in g" :key="n" :class="{ on: n === 'layers' }" :aria-label="n"><svg viewBox="0 0 22 22" v-html="icons[n]"></svg></button>
        </div>
      </aside>

      <section class="layers">
        <div class="layer-tabs">
          <button class="on">Layers</button>
          <button class="asset">Asset Expo</button>
          <button>Artboards</button>
          <svg class="dbl fwd" viewBox="0 0 10 8"><path d="M1 .5 4.500 4 1 7.500M5.500 .5 9 4 5.500 7.500" /></svg>
          <span class="bar"></span>
          <svg class="menu" viewBox="0 0 12 12"><path d="M0 2h12M0 6h12M0 10h12" /></svg>
        </div>
        <div class="search-row">
          <div class="search">
            <svg viewBox="0 0 22 22" v-html="icons.search"></svg>
            <input type="text" placeholder="Search All" aria-label="Search layers" />
          </div>
          <button class="icon-btn" aria-label="Filter"><svg viewBox="0 0 22 22" v-html="icons.funnel"></svg></button>
        </div>
        <div class="list">
          <div class="list-body">
            <div class="clip">
              <div class="row">
                <span class="cell"><svg class="eye" viewBox="0 0 14 10"><path d="M1 5c3-5 9-5 12 0-3 5-9 5-12 0Z" /></svg></span>
                <span class="cell"></span><span class="cell color"><i></i></span>
                <span class="arrow first"><i class="chev down"></i></span>
                <span class="thumb-cell"><span class="thumb big"></span></span>
                <b class="name">Layer 1</b>
                <span class="cell target"><i></i></span>
              </div>
            </div>
            <ul>
              <li v-for="(r, i) in rows" :key="i" class="row">
                <span class="cell"></span><span class="cell"></span><span class="cell color"><i></i></span>
                <span class="arrow"><i v-if="r.kind !== 'castle'" class="chev right"></i></span>
                <span class="thumb-cell">
                  <svg class="thumb" viewBox="0 0 18 18">
                    <template v-for="(o, k) in r.dots" :key="k">
                      <path v-if="o.star" :transform="`translate(${o.x} ${o.y}) scale(${o.r})`" :fill="o.c" d="M0-1 .3-.3 1 0 .3.3 0 1-.3.3-1 0-.3-.3Z" />
                      <circle v-else :cx="o.x" :cy="o.y" :r="o.r" :fill="o.c" />
                    </template>
                    <path v-if="r.kind === 'castle'" fill="#f0388c" d="M2 16v-3l1-3 1 3 1-4 1 3 2-4 1 2 1-7 1-2 1 2v6l1 3 1-4 1 5 1-2 1 5-3-1-1 2-1-3-1 4-1-2-2-1-1 1Z" />
                    <path v-if="r.kind === 'outline'" stroke="#f3a866" d="M2 15l2-5 2 4 1-6 2 4 2.500-11L13 9l-1 6 3-5 1 6M5 16l4-4M10 3v9" />
                    <text v-if="r.kind === 'script'" x="9" y="14" text-anchor="middle" font-family="Liberation Serif" font-style="italic" font-size="16" fill="#fff" stroke="#f3b070">70</text>
                    <text v-if="r.kind === 'blue'" x="9" y="14" text-anchor="middle" font-family="Liberation Serif" font-weight="700" font-size="17" fill="#3f86ee">70</text>
                    <text v-if="r.kind === 'purple'" x="9" y="14" text-anchor="middle" font-family="Open Sans" font-weight="800" font-size="15" fill="#8a2be2">70</text>
                    <text v-if="r.kind === 'word'" x="9" y="10" text-anchor="middle" font-family="Liberation Serif" font-weight="700" font-size="4" fill="#111" stroke="#111">Disneyland</text>
                  </svg>
                </span>
                <span class="name">{{ r.name }}</span>
                <span class="cell target"><i></i></span>
              </li>
            </ul>
          </div>
          <div class="list-scroll"><i class="chev up"></i><span class="track"></span><i class="chev down"></i></div>
        </div>
        <div class="layer-foot">
          <span>1 Layer</span>
          <button v-for="a in layerActions" :key="a.icon" class="icon-btn" :class="{ dim: !a.on }" :aria-label="a.icon"><svg viewBox="0 0 22 22" v-html="icons[a.icon]"></svg></button>
        </div>
      </section>
    </div>
  </div>
</template>

<style>
body { background: #515151; }
</style>

<style scoped>
* { box-sizing: border-box; }
.app {
  display: flex; flex-direction: column; height: 100vh; overflow: hidden;
  background: #515151; color: #dedede;
  font: 12px/16px "Open Sans", "Noto Sans", sans-serif;
}
button, input { font: inherit; color: inherit; margin: 0; padding: 0; border: 0; background: none; }
button { display: flex; align-items: center; justify-content: center; flex: none; white-space: nowrap; }
input { min-width: 0; outline: 0; }
svg { fill: none; stroke: currentColor; display: block; flex: none; overflow: visible; color: #cfcfcf; }
.icon-btn svg { width: 20px; height: 20px; }
.dim { opacity: .4; }
.dot { position: absolute; width: 7px; height: 7px; border-radius: 50%; background: #2d8cf5; }
.chev { width: 6px; height: 6px; border: solid #e6e6e6; border-width: 0 2px 2px 0; flex: none; }
.chev.down { transform: translateY(-2px) rotate(45deg); }
.chev.up { transform: translateY(2px) rotate(225deg); }
.chev.right { transform: rotate(-45deg); }
.dbl { width: 8px; height: 8px; }
.x { width: 8px; height: 8px; stroke-width: 2; }
.grip { display: block; width: 22px; height: 4px; margin: 0 auto; background: repeating-linear-gradient(90deg, #3a3a3a 0 1px, #4a4a4a 1px 2px); }

.titlebar { position: relative; display: flex; align-items: center; height: 37px; padding: 0 9px 2px 10px; border-bottom: 1px solid #3c3c3c; flex: none; }
.light { width: 14px; height: 14px; border-radius: 50%; margin-right: 8px; }
.red { background: radial-gradient(circle, #7a0c08 0 2px, #ff5c54 3px); }
.yellow { background: #ffbd2e; }
.green { background: #27cd41; }
.home { margin: 0 13px 0 8px; }
.vline { width: 1px; height: 22px; background: #646464; }
h1 { position: absolute; inset: 0 25px 0 0; margin: 0; text-align: center; font-size: 14px; line-height: 36px; font-weight: 400; pointer-events: none; }
.title-right { display: flex; align-items: center; gap: 12px; margin-left: auto; position: relative; }
.share { width: 57px; height: 27px; border-radius: 14px; background: #1473e6; color: #fff; font-size: 13px; font-weight: 600; }
.bell { position: relative; margin-right: 4px; }
.bell .dot { right: 1px; top: 0; }
.title-right .vline { margin: 0 6px 0 0; }
.title-right .icon-btn:last-child { margin-left: 6px; }

.controlbar { display: flex; align-items: center; height: 38px; border-bottom: 1px solid #3c3c3c; border-top: 1px solid #454545; padding: 0 16px 0 6px; flex: none; }
.vgrip { width: 2px; height: 22px; background: repeating-linear-gradient(#3a3a3a 0 1px, #515151 1px 3px); margin-right: 8px; }
.selection { width: 99px; }
.vsep { width: 1px; height: 32px; background: #494949; }
.combo { display: flex; height: 23px; border: 1px solid #666; border-radius: 3px; background: #464646; overflow: hidden; flex: none; }
.dd { width: 20px; border-left: 1px solid #5c5c5c; }
.dd.step { flex-direction: column; gap: 3px; border: 0; border-right: 1px solid #5c5c5c; }
.fill { margin-left: 8px; }
.sw { width: 22px; border: 1px solid #eee; }
.gradient, .grad i { background: linear-gradient(90deg, #ff2391, #ff9ccb); }
.none { background: #fff; }
.none svg { width: 20px; height: 20px; }
.plain { background: #e6e6e6; width: 21px; }
.strk { margin-left: 5px; }
.under { color: #fff; font-size: 11px; font-weight: 600; line-height: 15px; border-bottom: 1px dotted #ddd; flex: none; }
.stroke-label { margin-left: 13px; width: 39px; }
.weight { margin-left: 5px; width: 97px; }
.weight input { flex: 1; }
.profile { margin-left: 5px; width: 122px; border-color: #5a5a5a; background: #515151; }
.profile input { flex: 1; background: #808080; }
.profile .dd { opacity: .3; border: 0; }
.brushdef { margin-left: 5px; }
.brush-name { width: 97px; background: #e8e8e8; color: #111; gap: 12px; font-weight: 500; }
.brush-name b { font-size: 12px; }
.opacity-label { margin-left: 7px; width: 45px; }
.opacity { margin-left: 6px; width: 86px; }
.opacity input { flex: 1; padding-left: 4px; color: #fff; font-weight: 500; }
.style-label { margin-left: 5px; width: 36px; }
.styl { margin-right: 7px; }
.btn { height: 22px; border: 1px solid #6e6e6e; border-radius: 3px; color: #fff; font-size: 11px; font-weight: 600; }
.doc { width: 112px; margin-left: 6px; }
.pref { width: 85px; margin: 0 10px 0 4px; }
.controlbar > .chev { margin: 0 9px 0 6px; }
.controlbar > .vsep + .icon-btn { margin-left: 17px; }
.control-right { display: flex; align-items: center; gap: 11px; margin-left: auto; }
.control-right .icon-btn svg { width: 18px; height: 18px; }
.control-right .icon-btn:last-child { margin-left: 10px; }

.workspace { position: relative; display: flex; flex: 1; min-height: 0; }
.col-head { height: 13px; background: #424242; border-bottom: 1px solid #3a3a3a; display: flex; align-items: center; padding: 0 7px; }
.toolbox { width: 82px; flex: none; border-right: 2px solid #3f3f3f; display: flex; flex-direction: column; }
.toolbox > .grip { margin: 4px auto 14px 29px; }
.tools { display: grid; grid-template-columns: 33px 33px; grid-template-rows: repeat(15, 1fr); height: 400px; margin-left: 6px; flex: none; }
.tool { position: relative; }
.tool svg { width: 22px; height: 22px; }
.tool.active::before { content: ""; position: absolute; inset: 1px; background: #2c2c2c; border-radius: 2px; }
.tool.active svg { position: relative; color: #fff; }
.tool.more::after { content: ""; position: absolute; right: 1px; bottom: 2px; width: 4px; height: 4px; background: #ddd; clip-path: polygon(100% 0, 100% 100%, 0 100%); }
.tool .dot { right: 3px; top: 4px; }
.paint { position: relative; height: 70px; margin: 1px 0 0 7px; border-top: 1px dotted #444; flex: none; }
.paint button { position: absolute; }
.paint-fill { left: 0; top: 6px; width: 39px; height: 39px; border: 2px solid #fff; outline: 1px solid #444; background: linear-gradient(90deg, #ff2391, #ff9ccb); }
.paint-stroke { left: 20px; top: 26px; width: 39px; height: 39px; background: #fff; outline: 1px solid #444; }
.paint-stroke svg { width: 39px; height: 39px; }
.paint-swap { left: 49px; top: 6px; }
.paint-swap svg { width: 13px; height: 13px; }
.paint-reset { left: 0; top: 51px; }
.paint-reset svg { width: 13px; height: 13px; }
.modes { display: flex; width: 65px; height: 23px; margin: 3px 0 0 7px; border: 1px solid #616161; border-radius: 3px; flex: none; }
.modes button { flex: 1; border-right: 1px solid #616161; }
.modes button:last-child { border-right: 0; }
.modes .on { background: #2e2e2e; }
.modes i { width: 14px; height: 14px; border: 1px solid #111; background: #000; }
.modes .grad i { background: linear-gradient(90deg, #ff2391, #ff9ccb); border: 1px solid #eee; outline: 1px solid #111; width: 13px; height: 13px; }
.modes .nopaint i { background: #fff; }
.modes svg { width: 12px; height: 12px; }
.draw { height: 21px; margin-top: 5px; }
.draw svg { width: 16px; height: 16px; }
.faint { opacity: .35; }
.screen { margin: 7px 0 0 26px; align-self: flex-start; }
.screen svg { width: 28px; height: 22px; }
.dots { gap: 2px; }
.dots i { width: 4px; height: 4px; border-radius: 50%; background: #cfcfcf; }
.toolbox .dots { margin: 23px 0 0 32px; align-self: flex-start; }

.center { flex: 1; min-width: 0; display: flex; flex-direction: column; }
.tabs { display: flex; height: 32px; background: #424242; border-bottom: 1px solid #3a3a3a; flex: none; overflow: hidden; }
.tab { gap: 10px; padding: 0 13px 0 9px; color: #bdbdbd; font-weight: 600; border-right: 1px solid #383838; }
.tab.active { background: #515151; color: #fff; }
.tab .x { stroke-width: 1; }
.tab.active .x { color: #fff; }
.stage { flex: 1; display: flex; min-height: 0; }
.canvas { position: relative; flex: 1; min-width: 0; display: flex; background: #606060; padding: 120px 278px 121px 237px; }
.artboard { flex: 1; background: #fff; border: 1px solid #111; }
.vscroll { width: 20px; background: #4b4b4b; border-left: 1px solid #444; border-right: 3px solid #434343; display: flex; justify-content: center; padding-top: 7px; }
.vscroll .chev, .list-scroll .chev { border-width: 0 1px 1px 0; border-color: #c0c0c0; }
.status { height: 22px; display: flex; align-items: center; gap: 7px; padding-left: 6px; border-top: 1px solid #484848; color: #dcdcdc; flex: none; }
.status b { font-weight: 600; }
.help { width: 15px; height: 15px; border-radius: 50%; background: #c9c9c9; color: #444; text-align: center; font-weight: 700; line-height: 15px; margin-right: 5px; }

.float { position: absolute; height: 68px; border: 2px solid #414141; border-bottom-width: 1px; border-radius: 5px; background: #515151; box-shadow: 0 0 4px #3c3c3c; }
.pens { left: 22px; top: 15px; width: 145px; }
.draws { left: 23px; top: 104px; width: 179px; }
.float-head { height: 14px; display: flex; align-items: center; justify-content: space-between; padding: 0 7px 0 4px; background: #424242; }
.float-head .x { stroke-width: 1; }
.float .grip { margin-top: 3px; }
.float-tools { display: flex; margin: 15px 0 0 -1px; }
.float-tools button { width: 33px; }
.float-tools svg { width: 22px; height: 22px; }
.float-tools svg.wide { width: 26px; height: 22px; }
.taskbar { position: absolute; left: 38px; bottom: 15px; width: 390px; height: 40px; display: flex; align-items: center; background: #515151; border: 2px solid #3a3a3a; border-radius: 5px; padding-left: 5px; }
.handle { width: 4px; height: 30px; border-radius: 2px; background: #a8a8a8; }
.task { height: 32px; border: 1px solid #6c6c6c; border-radius: 3px; color: #fff; font-size: 13px; font-weight: 600; }
.task svg { width: 20px; height: 20px; }
.draw-btn { width: 133px; margin: 0 4px 0 11px; gap: 8px; }
.gen-btn { width: 157px; gap: 4px; }
.img-btn { margin-left: 7px; }
.taskbar .dots { margin-left: 13px; gap: 3px; }
.taskbar .dots i { width: 5px; height: 5px; }

.dock { width: 42px; flex: none; border-left: 1px solid #3c3c3c; }
.dock .col-head { justify-content: flex-end; padding-right: 6px; }
.dock-group { border-bottom: 1px solid #3a3a3a; padding: 4px 0 3px; }
.dock-group .grip { margin-bottom: 3px; }
.dock-group button { width: 30px; height: 31px; margin: 0 auto; }
.dock-group button.on { background: #323232; border-radius: 3px; box-shadow: inset 0 0 0 1px #606060; height: 27px; margin: 2px auto; }
.dock-group svg { width: 20px; height: 20px; }

.layers { position: absolute; right: 43px; bottom: 0; width: 276px; height: 528px; display: flex; flex-direction: column; background: #515151; border: solid #3c3c3c; border-width: 5px 1px 0 1px; overflow: hidden; box-shadow: -1px 0 4px #484848; }
.layer-tabs { display: flex; align-items: center; height: 29px; background: #424242; flex: none; }
.layer-tabs button { height: 29px; padding: 0 6px 2px 9px; color: #b5b5b5; font-weight: 600; border-right: 1px solid #4e4e4e; }
.layer-tabs .on { background: #515151; color: #fff; padding: 0 9px 2px 9px; }
.layer-tabs .asset { padding-right: 0; }
.fwd { width: 10px; height: 8px; margin-left: auto; }
.layer-tabs .bar { width: 1px; height: 12px; background: #bbb; margin: 0 8px; }
.menu { width: 12px; height: 12px; margin-right: 6px; }
.search-row { display: flex; align-items: flex-start; height: 39px; margin: 8px 6px 0; border: 1px solid #4a4a4a; padding: 3px 3px 0 6px; flex: none; }
.search { flex: 1; display: flex; align-items: center; gap: 11px; height: 26px; padding-left: 5px; background: #444; border: 1px solid #616161; border-radius: 3px; margin-right: 9px; }
.search svg { width: 14px; height: 14px; }
.search input::placeholder { color: #e4e4e4; font-style: italic; opacity: 1; }
.search-row .icon-btn { height: 26px; }
.search-row .icon-btn svg { width: 18px; height: 18px; }
.list { display: flex; flex: 1; min-height: 0; margin: 0 6px; border: 1px solid #5e5e5e; border-radius: 2px; }
.list-body { flex: 1; display: flex; flex-direction: column; }
.clip { height: 10px; overflow: hidden; display: flex; flex-direction: column; justify-content: flex-end; flex: none; }
.clip .row { height: 23px; flex: none; }
ul { flex: 1; display: grid; grid-template-rows: repeat(18, 1fr); list-style: none; margin: 0; padding: 0; min-height: 0; }
.row { display: flex; align-items: center; border-bottom: 1px solid #606060; min-height: 0; }
.cell { width: 23px; align-self: stretch; border-right: 1px solid #5a5a5a; display: flex; align-items: center; justify-content: center; flex: none; }
.cell.color { width: 8px; }
.cell.color i { width: 4px; align-self: stretch; margin: 1px 0; background: #4a80f5; }
.arrow { width: 51px; padding-left: 29px; flex: none; }
.arrow .chev { display: block; }
.arrow.first { width: 26px; padding-left: 9px; }
.thumb-cell { width: 20px; flex: none; }
.thumb { width: 20px; height: 20px; background: #fff; border: 1px solid #111; border-radius: 1px; overflow: hidden; stroke: none; }
.thumb.big { display: block; width: 18px; height: 18px; border: 0; }
.name { flex: 1; padding-left: 7px; white-space: nowrap; color: #ececec; font-weight: 500; }
b.name { padding-left: 5px; font-weight: 700; line-height: 20px; }
.cell.target { width: 39px; border-right: 0; border-left: 1px solid #5a5a5a; justify-content: flex-start; padding-left: 6px; }
.target i { width: 9px; height: 9px; border: 1px solid #d0d0d0; border-radius: 50%; }
.eye { width: 14px; height: 10px; }
.list-scroll { width: 13px; background: #464646; display: flex; flex-direction: column; align-items: center; padding: 4px 0; flex: none; }
.track { flex: 1; width: 11px; margin: 14px 0 4px; border-radius: 5px; background: #636363; }
.layer-foot { display: flex; align-items: center; height: 20px; margin: 0 6px -5px; flex: none; }
.layer-foot span { width: 48px; }
.layer-foot .icon-btn { width: 28px; }
.layer-foot svg { width: 15px; height: 15px; }
</style>
